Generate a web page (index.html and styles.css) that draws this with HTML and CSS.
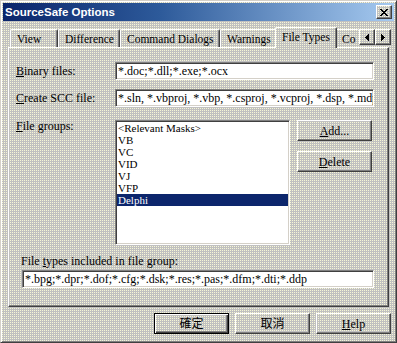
FILE: index.html
```html
<!DOCTYPE html>
<html>
<head>
<meta charset="utf-8">
<title>SourceSafe Options</title>
<link rel="stylesheet" href="styles.css">
</head>
<body>
<div class="window dither">
  <div class="titlebar">
    <span class="title">SourceSafe Options</span>
    <span class="close dither raised"><svg width="8" height="7" viewBox="0 0 8 7" shape-rendering="crispEdges"><path d="M0 0h2v1h-2zM6 0h2v1h-2zM1 1h2v1h-2zM5 1h2v1h-2zM2 2h4v1h-4zM3 3h2v1h-2zM2 4h4v1h-4zM1 5h2v1h-2zM5 5h2v1h-2zM0 6h2v1h-2zM6 6h2v1h-2z" fill="#000"/></svg></span>
  </div>
  <div class="body">
    <div class="tabstrip">
      <div class="tab t-view">View</div>
      <div class="tab t-diff">Difference</div>
      <div class="tab t-cmd">Command Dialogs</div>
      <div class="tab t-warn">Warnings</div>
      <div class="tab t-file selected dither">File Types</div>
      <div class="tab t-co">Co</div>
      <div class="scroller">
        <span class="arrow dither raised"><svg width="4" height="7" viewBox="0 0 4 7" shape-rendering="crispEdges"><path d="M3 0h1v7h-1zM2 1h1v5h-1zM1 2h1v3h-1zM0 3h1v1h-1z" fill="#000"/></svg></span>
        <span class="arrow dither raised"><svg width="4" height="7" viewBox="0 0 4 7" shape-rendering="crispEdges"><path d="M0 0h1v7h-1zM1 1h1v5h-1zM2 2h1v3h-1zM3 3h1v1h-1z" fill="#000"/></svg></span>
      </div>
    </div>
    <div class="panel">
      <div class="row">
        <label class="label"><u>B</u>inary files:</label>
        <div class="field sunken">*.doc;*.dll;*.exe;*.ocx</div>
      </div>
      <div class="row row2">
        <label class="label"><u>C</u>reate SCC file:</label>
        <div class="field sunken">*.sln, *.vbproj, *.vbp, *.csproj, *.vcproj, *.dsp, *.mdp</div>
      </div>
      <div class="groups">
        <label class="label glabel"><u>F</u>ile groups:</label>
        <div class="list sunken">
          <div class="item">&lt;Relevant Masks&gt;</div>
          <div class="item">VB</div>
          <div class="item">VC</div>
          <div class="item">VID</div>
          <div class="item">VJ</div>
          <div class="item">VFP</div>
          <div class="item sel">Delphi</div>
        </div>
        <div class="side">
          <div class="btn raised"><span><u>A</u>dd...</span></div>
          <div class="btn raised"><span><u>D</u>elete</span></div>
        </div>
      </div>
      <div class="blabel">File <u>t</u>ypes included in file group:</div>
      <div class="field sunken wide">*.bpg;*.dpr;*.dof;*.cfg;*.dsk;*.res;*.pas;*.dfm;*.dti;*.ddp</div>
    </div>
    <div class="actions">
      <div class="btn default"><span>確定</span></div>
      <div class="btn raised"><span>取消</span></div>
      <div class="btn raised"><span><u>H</u>elp</span></div>
    </div>
  </div>
</div>
</body>
</html>
```

FILE: styles.css
```css
* { box-sizing: border-box; }
html, body { margin: 0; padding: 0; }
body {
  width: 397px;
  height: 343px;
  overflow: hidden;
  font-family: "Liberation Serif", "Noto Sans CJK TC", serif;
  font-size: 12px;
  color: #000;
  background: #c0c0c0;
}
u { text-decoration: underline; text-underline-offset: 1px; }

.dither {
  background-color: #f6f6d6;
  background-image:
    linear-gradient(90deg, transparent 1px, #c0c0c0 1px),
    linear-gradient(180deg, transparent 1px, #c0c0c0 1px);
  background-size: 2px 2px;
  background-position: 0 0;
  background-attachment: fixed;
}

.raised {
  border: 1px solid;
  border-color: #ffffff #404040 #404040 #ffffff;
  box-shadow: inset -1px -1px #808080;
}
.sunken {
  background: #ffffff;
  border: 1px solid;
  border-color: #808080 #ffffff #ffffff #808080;
  box-shadow: inset 1px 1px #404040, inset -1px -1px #d4d0c8;
}

.window {
  width: 397px;
  height: 343px;
  border: 1px solid;
  border-color: #d4d0c8 #404040 #404040 #d4d0c8;
  box-shadow: inset 1px 1px #ffffff, inset -1px -1px #808080;
  padding: 2px;
  display: flex;
  flex-direction: column;
}

.titlebar {
  height: 18px;
  background: linear-gradient(90deg, #0a246a 0%, #2d5a9a 40%, #a6caf0 100%);
  display: flex;
  align-items: center;
  justify-content: space-between;
  padding: 0 2px 0 2px;
}
.title {
  font-family: "Liberation Sans", "DejaVu Sans", sans-serif;
  font-weight: bold;
  font-size: 11.5px;
  color: #ffffff;
  line-height: 14px;
}
.close {
  width: 16px;
  height: 14px;
  display: flex;
  align-items: center;
  justify-content: center;
}

.body {
  flex: 1;
  padding: 6px 5px 0 5px;
  display: flex;
  flex-direction: column;
}

.tabstrip {
  position: relative;
  z-index: 1;
  height: 21px;
  display: flex;
  align-items: flex-start;
  padding-left: 2px;
  margin-bottom: -1px;
}
.tab {
  position: relative;
  margin-top: 2px;
  height: 18px;
  border-top: 1px solid #ffffff;
  border-left: 1px solid #ffffff;
  border-right: 1px solid #404040;
  border-radius: 2px 2px 0 0;
  box-shadow: inset -1px 0 #808080;
  padding: 2px 0 0 6px;
  line-height: 14px;
  font-size: 11.5px;
  white-space: nowrap;
  overflow: hidden;
  flex: none;
}
.tab.selected {
  margin-top: 0;
  height: 21px;
  margin-left: -2px;
  margin-right: -2px;
  z-index: 2;
}
.t-view { width: 48px; }
.t-diff { width: 62px; }
.t-cmd { width: 100px; }
.t-warn { width: 57px; }
.t-file { width: 62px; }
.t-co { width: 24px; border-right: none; box-shadow: none; }

.scroller {
  position: absolute;
  right: -2px;
  top: 2px;
  display: flex;
  z-index: 3;
}
.arrow {
  width: 16px;
  height: 16px;
  display: flex;
  align-items: center;
  justify-content: center;
}

.panel {
  height: 260px;
  border: 1px solid;
  border-color: #ffffff #404040 #404040 #ffffff;
  box-shadow: inset -1px -1px #808080;
  padding: 14px 0 0 7px;
  display: flex;
  flex-direction: column;
}

.row {
  display: flex;
  align-items: center;
  height: 18px;
}
.row2 { margin-top: 9px; }
.label {
  width: 99px;
  flex: none;
  line-height: 14px;
  white-space: nowrap;
}
.field {
  width: 259px;
  height: 18px;
  padding: 0 2px;
  line-height: 16px;
  white-space: nowrap;
  overflow: hidden;
}

.groups {
  display: flex;
  align-items: flex-start;
  margin-top: 13px;
}
.glabel { margin-top: -1px; }
.list {
  width: 175px;
  height: 125px;
  padding: 1px;
  overflow: hidden;
}
.item {
  height: 12px;
  line-height: 12px;
  font-size: 11px;
  padding-left: 1px;
  white-space: nowrap;
}
.item.sel {
  background: #0c266c;
  color: #ffffff;
}
.side {
  margin-left: 7px;
  display: flex;
  flex-direction: column;
  gap: 10px;
}

.btn {
  width: 75px;
  height: 21px;
  display: flex;
  align-items: center;
  justify-content: center;
  line-height: 14px;
  flex: none;
}
.btn.default {
  border: 1px solid #000000;
  box-shadow: inset 1px 1px #ffffff, inset -1px -1px #404040, inset -2px -2px #808080;
}

.blabel {
  margin-top: 9px;
  padding-left: 5px;
  line-height: 14px;
  height: 14px;
}
.field.wide {
  margin-top: 2px;
  margin-left: 6px;
  width: 352px;
}

.actions {
  display: flex;
  justify-content: flex-end;
  gap: 6px;
  margin-top: 6px;
  margin-right: -2px;
}
```
